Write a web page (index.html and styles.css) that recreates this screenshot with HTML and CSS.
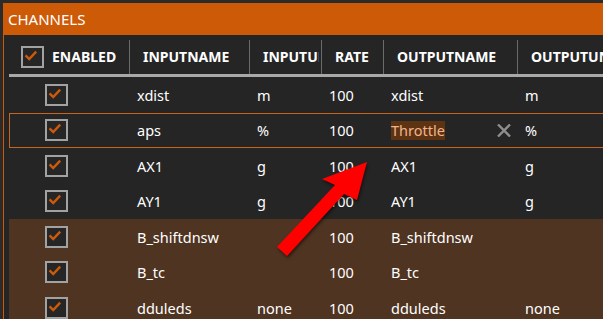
FILE: index.html
```html
<!DOCTYPE html>
<html lang="en">
<head>
  <meta charset="UTF-8">
  <title>Channels</title>
  <link rel="stylesheet" href="styles.css">
</head>
<body>
  <div class="topline"></div>
  <div class="panel">
    <div class="titlebar">CHANNELS</div>
    <div class="panel-body">
      <div class="grid">
        <!-- header -->
        <div class="row head">
          <div class="cell first">
            <span class="check"><svg viewBox="0 0 23 22"><path d="M5 11 L9.5 15.5 L18 6.5"/></svg></span>
            ENABLED
          </div>
          <div class="cell">INPUTNAME</div>
          <div class="cell">INPUTUNIT</div>
          <div class="cell">RATE</div>
          <div class="cell">OUTPUTNAME</div>
          <div class="cell">OUTPUTUNIT</div>
        </div>

        <div class="row">
          <div class="cell first"><span class="check"><svg viewBox="0 0 23 22"><path d="M5 11 L9.5 15.5 L18 6.5"/></svg></span></div>
          <div class="cell">xdist</div>
          <div class="cell">m</div>
          <div class="cell">100</div>
          <div class="cell">xdist</div>
          <div class="cell">m</div>
        </div>

        <div class="row selected">
          <div class="cell first"><span class="check"><svg viewBox="0 0 23 22"><path d="M5 11 L9.5 15.5 L18 6.5"/></svg></span></div>
          <div class="cell">aps</div>
          <div class="cell">%</div>
          <div class="cell">100</div>
          <div class="cell editing">
            <span class="edit-text">Throttle</span>
            <svg class="clear" viewBox="0 0 14 13"><path d="M1 0.5 L13 12.5 M13 0.5 L1 12.5"/></svg>
          </div>
          <div class="cell">%</div>
        </div>

        <div class="row">
          <div class="cell first"><span class="check"><svg viewBox="0 0 23 22"><path d="M5 11 L9.5 15.5 L18 6.5"/></svg></span></div>
          <div class="cell">AX1</div>
          <div class="cell">g</div>
          <div class="cell">100</div>
          <div class="cell">AX1</div>
          <div class="cell">g</div>
        </div>

        <div class="row">
          <div class="cell first"><span class="check"><svg viewBox="0 0 23 22"><path d="M5 11 L9.5 15.5 L18 6.5"/></svg></span></div>
          <div class="cell">AY1</div>
          <div class="cell">g</div>
          <div class="cell">100</div>
          <div class="cell">AY1</div>
          <div class="cell">g</div>
        </div>

        <div class="row bool">
          <div class="cell first"><span class="check"><svg viewBox="0 0 23 22"><path d="M5 11 L9.5 15.5 L18 6.5"/></svg></span></div>
          <div class="cell">B_shiftdnsw</div>
          <div class="cell"></div>
          <div class="cell">100</div>
          <div class="cell">B_shiftdnsw</div>
          <div class="cell"></div>
        </div>

        <div class="row bool">
          <div class="cell first"><span class="check"><svg viewBox="0 0 23 22"><path d="M5 11 L9.5 15.5 L18 6.5"/></svg></span></div>
          <div class="cell">B_tc</div>
          <div class="cell"></div>
          <div class="cell">100</div>
          <div class="cell">B_tc</div>
          <div class="cell"></div>
        </div>

        <div class="row bool">
          <div class="cell first"><span class="check"><svg viewBox="0 0 23 22"><path d="M5 11 L9.5 15.5 L18 6.5"/></svg></span></div>
          <div class="cell">dduleds</div>
          <div class="cell">none</div>
          <div class="cell">100</div>
          <div class="cell">dduleds</div>
          <div class="cell">none</div>
        </div>
      </div>
    </div>
  </div>

  <!-- annotation arrow drawn over the screenshot -->
  <svg class="arrow" viewBox="0 0 603 319">
    <polygon points="367,162 322,179 335,185 277,247 287,256 344,194 357,200"/>
  </svg>
</body>
</html>
```

FILE: styles.css
```css
body {
  margin: 0;
  height: 319px;
  overflow: hidden;
  background: #2b2b2b;
  color: #fff;
  font-family: "Noto Sans", "Open Sans", sans-serif;
  position: relative;
}

.topline {
  height: 3px;
}

.panel {
  margin-left: 3px;
}

.titlebar {
  height: 32px;
  line-height: 32px;
  padding-left: 5px;
  background: #cd5a07;
  font-size: 15px;
}

.panel-body {
  height: 290px;
  border-left: 1px solid #cd5a07;
  background: #252526;
  padding-left: 5px;
  overflow: hidden;
}

.grid {
  width: 720px;
}

.row {
  display: grid;
  grid-template-columns: 120px 120px 72px 62px 134px 1fr;
  height: 35.5px;
  align-items: center;
  font-size: 14.5px;
}

.cell {
  padding-left: 8px;
  white-space: nowrap;
  overflow: hidden;
}

.cell.first {
  padding-left: 36px;
  display: flex;
  align-items: center;
}

/* header */
.row.head {
  height: 39px;
  border-bottom: 3px solid #a9a9a9;
  align-items: end;
  font-size: 14px;
  font-weight: 700;
}

.row.head .cell {
  height: 34px;
  line-height: 34px;
  padding-left: 13px;
  border-left: 1px solid #6b6b6b;
  margin-right: 2px;
}

.row.head .cell.first {
  padding-left: 12px;
  border-left: none;
  gap: 8px;
  margin-right: 0;
}

/* checkbox */
.check {
  width: 19px;
  height: 18px;
  border: 2px solid #a2a2a2;
  background: #262626;
  display: block;
  flex: none;
}

.check svg {
  display: block;
  width: 19px;
  height: 18px;
}

.check path {
  fill: none;
  stroke: #cc5a0c;
  stroke-width: 3;
  transform: translate(-2px, -2px);
}

/* selected / editing row */
.row.selected {
  box-shadow: inset 0 0 0 1px #c8641e;
}

.cell.editing {
  display: flex;
  align-items: center;
  justify-content: space-between;
  padding-right: 6px;
}

.edit-text {
  background: #5e3312;
  color: #f0b48c;
  line-height: 19px;
}

.clear {
  width: 14px;
  height: 13px;
}

.clear path {
  stroke: #8e8e8e;
  stroke-width: 2.4;
  fill: none;
}

/* boolean channels */
.row.bool {
  background: #4f3421;
}

.arrow {
  position: absolute;
  left: 0;
  top: 0;
  width: 603px;
  height: 319px;
  pointer-events: none;
  filter: drop-shadow(1px 2px 1.5px rgba(0, 0, 0, 0.5));
}

.arrow polygon {
  fill: #ff0000;
}
```
